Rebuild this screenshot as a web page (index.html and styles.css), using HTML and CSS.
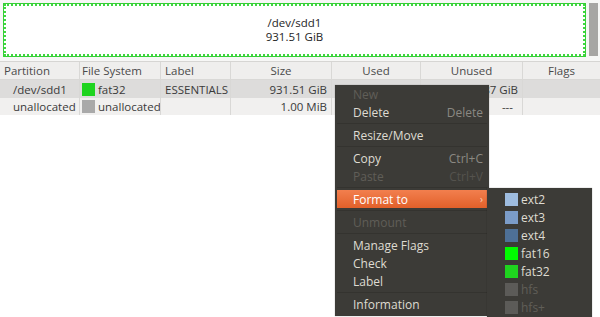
FILE: index.html
```html
<!DOCTYPE html>
<html>
<head>
<meta charset="utf-8">
<link rel="stylesheet" href="styles.css">
</head>
<body>
<div class="app">
  <div class="map">
    <div class="disk">
      <div class="dname">/dev/sdd1</div>
      <div class="dsize">931.51 GiB</div>
    </div>
    <div class="scroll"></div>
  </div>
  <div class="table">
    <div class="row head">
      <div class="c c1">Partition</div>
      <div class="c c2">File System</div>
      <div class="c c3">Label</div>
      <div class="c c4 center">Size</div>
      <div class="c c5 center">Used</div>
      <div class="c c6 center">Unused</div>
      <div class="c c7 center">Flags</div>
    </div>
    <div class="row sel">
      <div class="c c1 ind">/dev/sdd1</div>
      <div class="c c2"><span class="sw fat32"></span>fat32</div>
      <div class="c c3">ESSENTIALS</div>
      <div class="c c4 right">931.51 GiB</div>
      <div class="c c5 right"></div>
      <div class="c c6 right">930.87 GiB</div>
      <div class="c c7"></div>
    </div>
    <div class="row alt">
      <div class="c c1 ind">unallocated</div>
      <div class="c c2"><span class="sw unal"></span>unallocated</div>
      <div class="c c3"></div>
      <div class="c c4 right">1.00 MiB</div>
      <div class="c c5 right"></div>
      <div class="c c6 right dash">---</div>
      <div class="c c7"></div>
    </div>
  </div>

  <div class="menu">
    <div class="item dis">New</div>
    <div class="item">Delete<span class="key">Delete</span></div>
    <div class="sep"></div>
    <div class="item">Resize/Move</div>
    <div class="sep"></div>
    <div class="item">Copy<span class="key">Ctrl+C</span></div>
    <div class="item dis">Paste<span class="key">Ctrl+V</span></div>
    <div class="sep"></div>
    <div class="item hl">Format to<span class="arrow">›</span></div>
    <div class="sep"></div>
    <div class="item dis">Unmount</div>
    <div class="sep"></div>
    <div class="item">Manage Flags</div>
    <div class="item">Check</div>
    <div class="item">Label</div>
    <div class="sep"></div>
    <div class="item">Information</div>
  </div>

  <div class="submenu">
    <div class="sitem"><span class="sw ext2"></span>ext2</div>
    <div class="sitem"><span class="sw ext3"></span>ext3</div>
    <div class="sitem"><span class="sw ext4"></span>ext4</div>
    <div class="sitem"><span class="sw fat16"></span>fat16</div>
    <div class="sitem"><span class="sw fat32"></span>fat32</div>
    <div class="sitem dis"><span class="sw hfs"></span>hfs</div>
    <div class="sitem dis"><span class="sw hfs"></span>hfs+</div>
  </div>
</div>
</body>
</html>
```
FILE: styles.css
```css
* { box-sizing: border-box; }
html, body { margin: 0; padding: 0; }
body {
  width: 600px;
  height: 317px;
  overflow: hidden;
  background: #ffffff;
  font-family: "Open Sans", "DejaVu Sans", sans-serif;
  font-size: 11.5px;
  color: #3a3a3a;
}
.app { position: relative; width: 600px; height: 317px; }

.map {
  height: 62px;
  background: #f7f7f6;
  border-bottom: 1px solid #d6d5d3;
  display: flex;
  align-items: flex-start;
  padding: 4px 2px 0 4px;
  gap: 4px;
}
.disk {
  width: 582px;
  height: 52px;
  background: #ffffff;
  border: 2px dotted #3fd83f;
  outline: 1px solid #36cf36;
  outline-offset: 0;
  display: flex;
  flex-direction: column;
  align-items: center;
  justify-content: center;
  line-height: 14px;
  color: #1e1e1e;
  font-size: 11.5px;
}
.scroll {
  width: 9px;
  height: 53px;
  margin-top: -1px;
  background: #a7a6a4;
}

.table { display: flex; flex-direction: column; }
.row { display: flex; height: 18px; }
.row.head { background: #efeeed; border-bottom: 1px solid #d9d8d6; height: 18px; color: #4a4a4a; }
.row.sel { background: #dddcdb; height: 18px; }
.row.alt { background: #f1f0ef; height: 17px; }
.c {
  display: flex;
  align-items: center;
  padding: 0 4px;
  border-right: 1px solid #d9d8d6;
  white-space: nowrap;
  overflow: hidden;
}
.c7 { border-right: none; }
.c1 { width: 80px; }
.c2 { width: 81px; padding-left: 2px; }
.c3 { width: 70px; }
.c4 { width: 101px; }
.c5 { width: 89px; }
.c6 { width: 102px; }
.c7 { width: 77px; }
.center { justify-content: center; }
.right { justify-content: flex-end; }
.ind { padding-left: 13px; }
.dash { padding-right: 9px; }
.row.head .c1 { padding-left: 4px; }

.sw { display: inline-block; width: 13px; height: 13px; margin-right: 3px; flex: none; }
.fat32 { background: #1fd41f; }
.unal { background: #a9a9a9; }
.ext2 { background: #9ebcdf; }
.ext3 { background: #7b9cc8; }
.ext4 { background: #4e7096; }
.fat16 { background: #00fb00; }
.hfs { background: #5c5b58; }

.menu {
  position: absolute;
  left: 335px;
  top: 85px;
  width: 154px;
  height: 231px;
  background: #3c3b37;
  padding: 0 2px 2px 2px;
  font-size: 12px;
  color: #dfdbd2;
  box-shadow: 0 0 1px rgba(0,0,0,0.4);
}
.item {
  height: 18px;
  display: flex;
  align-items: center;
  justify-content: space-between;
  padding: 0 4px 0 16px;
}
.item.dis { color: #605e58; }
.key { color: #8b8983; }
.item.dis .key { color: #55534e; }
.sep { height: 5px; border-top: 2px solid #3c3b37; border-bottom: 2px solid #3c3b37; background: #34332f; }
.item.hl {
  background: linear-gradient(#f27f4e, #e2602a);
  color: #ffffff;
}
.arrow { color: #f5d0bc; font-size: 10px; margin-right: 0; }

.submenu {
  position: absolute;
  left: 487px;
  top: 188px;
  width: 105px;
  height: 140px;
  background: #3c3b37;
  padding-top: 2px;
  font-size: 12px;
  color: #dfdbd2;
  box-shadow: 0 0 1px rgba(0,0,0,0.4);
}
.sitem {
  height: 18px;
  display: flex;
  align-items: center;
  padding-left: 18px;
}
.sitem.dis { color: #605e58; }
```
